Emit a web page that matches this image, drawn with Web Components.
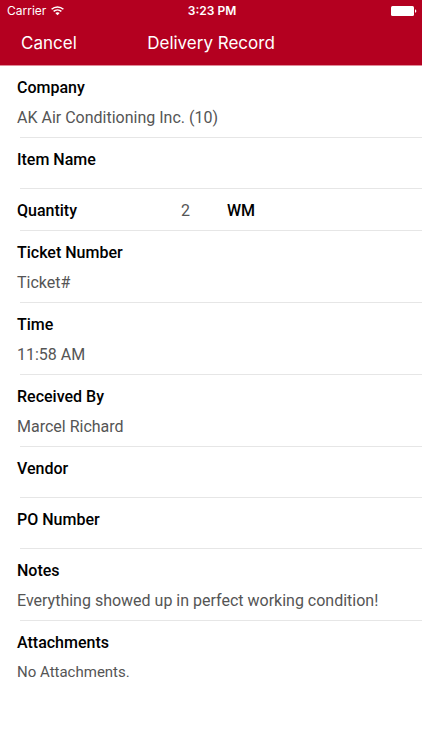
<!DOCTYPE html>
<html lang="en">
<head>
<meta charset="utf-8">
<meta name="viewport" content="width=device-width, initial-scale=1">
<title>Delivery Record</title>
<style>
body { margin: 0; background: #fff; font-family: Roboto, "Liberation Sans", sans-serif; }
</style>
</head>
<body>
<delivery-app></delivery-app>
<script>
const define = (name, html) => {
  customElements.define(name, class extends HTMLElement {
    constructor() {
      super();
      this.attachShadow({ mode: "open" }).innerHTML = html;
    }
  });
};

define("status-bar", `
<style>
:host { display: grid; grid-template-columns: 1fr auto 1fr; align-items: center; height: 21px; padding: 0 5px 0 7px; color: #fff; font: 12px/20px Inter, sans-serif; }
.left { display: flex; align-items: center; gap: 5px; }
time { font-weight: 600; }
.battery { justify-self: end; }
svg { display: block; }
</style>
<div class="left"><span>Carrier</span>
<svg width="13" height="10" viewBox="0 0 13 10" fill="none" stroke="#fff" stroke-width="1.5"><path d="M.6 3.300C3.900.2 9.100.2 12.400 3.300M2.600 5.400c2.200-2 5.600-2 7.800 0"/><path d="M4.300 7c1.200-1.100 3.200-1.100 4.400 0L6.500 9.300z" fill="#fff" stroke="none"/></svg></div>
<time>3:23 PM</time>
<svg class="battery" width="26" height="10" viewBox="0 0 26 10"><rect x="0" y="0" width="23" height="10" rx="1.500" fill="#fff"/><path d="M24 3.200c1.800.4 1.800 3.200 0 3.600z" fill="#fff"/></svg>`);

define("nav-bar", `
<style>
:host { display: grid; grid-template-columns: 1fr auto 1fr; align-items: center; height: 44px; padding: 0 21px; color: #fff; font: 17px/24px Inter, sans-serif; }
button { justify-self: start; padding: 0; border: 0; background: none; color: inherit; font: inherit; }
h1 { margin: 0; font: inherit; }
</style>
<button type="button">Cancel</button><h1><slot></slot></h1>`);

define("record-field", `
<style>
:host { display: block; padding-left: 17px; }
dl { margin: 0; padding: 11px 0 9px; }
dt { font: 500 16px/21px Roboto, sans-serif; color: #000; }
dd { margin: 9px 0 0; font: 16px/21px Roboto, sans-serif; color: #555; }
:host([empty]) dd { display: none; }
:host([empty]) dl { padding-bottom: 18px; }
hr { margin: 0 0 0 3px; border: 0; height: 1px; background: #e6e6e6; }
:host([last]) hr { display: none; }
:host([last]) dd { font-size: 15px; }
</style>
<dl><dt><slot name="label"></slot></dt><dd><slot></slot></dd></dl><hr>`);

define("quantity-field", `
<style>
:host { display: block; padding-left: 17px; }
div { display: flex; padding: 11px 0 9px; font: 16px/21px Roboto, sans-serif; }
.label { flex: 0 0 164px; font-weight: 500; color: #000; }
.value { flex: 0 0 46px; color: #555; }
.unit { font-weight: 500; color: #000; }
hr { margin: 0 0 0 3px; border: 0; height: 1px; background: #e6e6e6; }
</style>
<div><span class="label"><slot name="label"></slot></span><span class="value"><slot></slot></span><span class="unit"><slot name="unit"></slot></span></div><hr>`);

define("delivery-app", `
<style>
:host { display: block; }
header { background: #b40020; border-bottom: 1px solid #e08a98; }
</style>
<header><status-bar></status-bar><nav-bar>Delivery Record</nav-bar></header>
<main>
<record-field><span slot="label">Company</span>AK Air Conditioning Inc. (10)</record-field>
<record-field empty><span slot="label">Item Name</span></record-field>
<quantity-field><span slot="label">Quantity</span>2<span slot="unit">WM</span></quantity-field>
<record-field><span slot="label">Ticket Number</span>Ticket#</record-field>
<record-field><span slot="label">Time</span>11:58 AM</record-field>
<record-field><span slot="label">Received By</span>Marcel Richard</record-field>
<record-field empty><span slot="label">Vendor</span></record-field>
<record-field empty><span slot="label">PO Number</span></record-field>
<record-field><span slot="label">Notes</span>Everything showed up in perfect working condition!</record-field>
<record-field last><span slot="label">Attachments</span>No Attachments.</record-field>
</main>`);
</script>
</body>
</html>
